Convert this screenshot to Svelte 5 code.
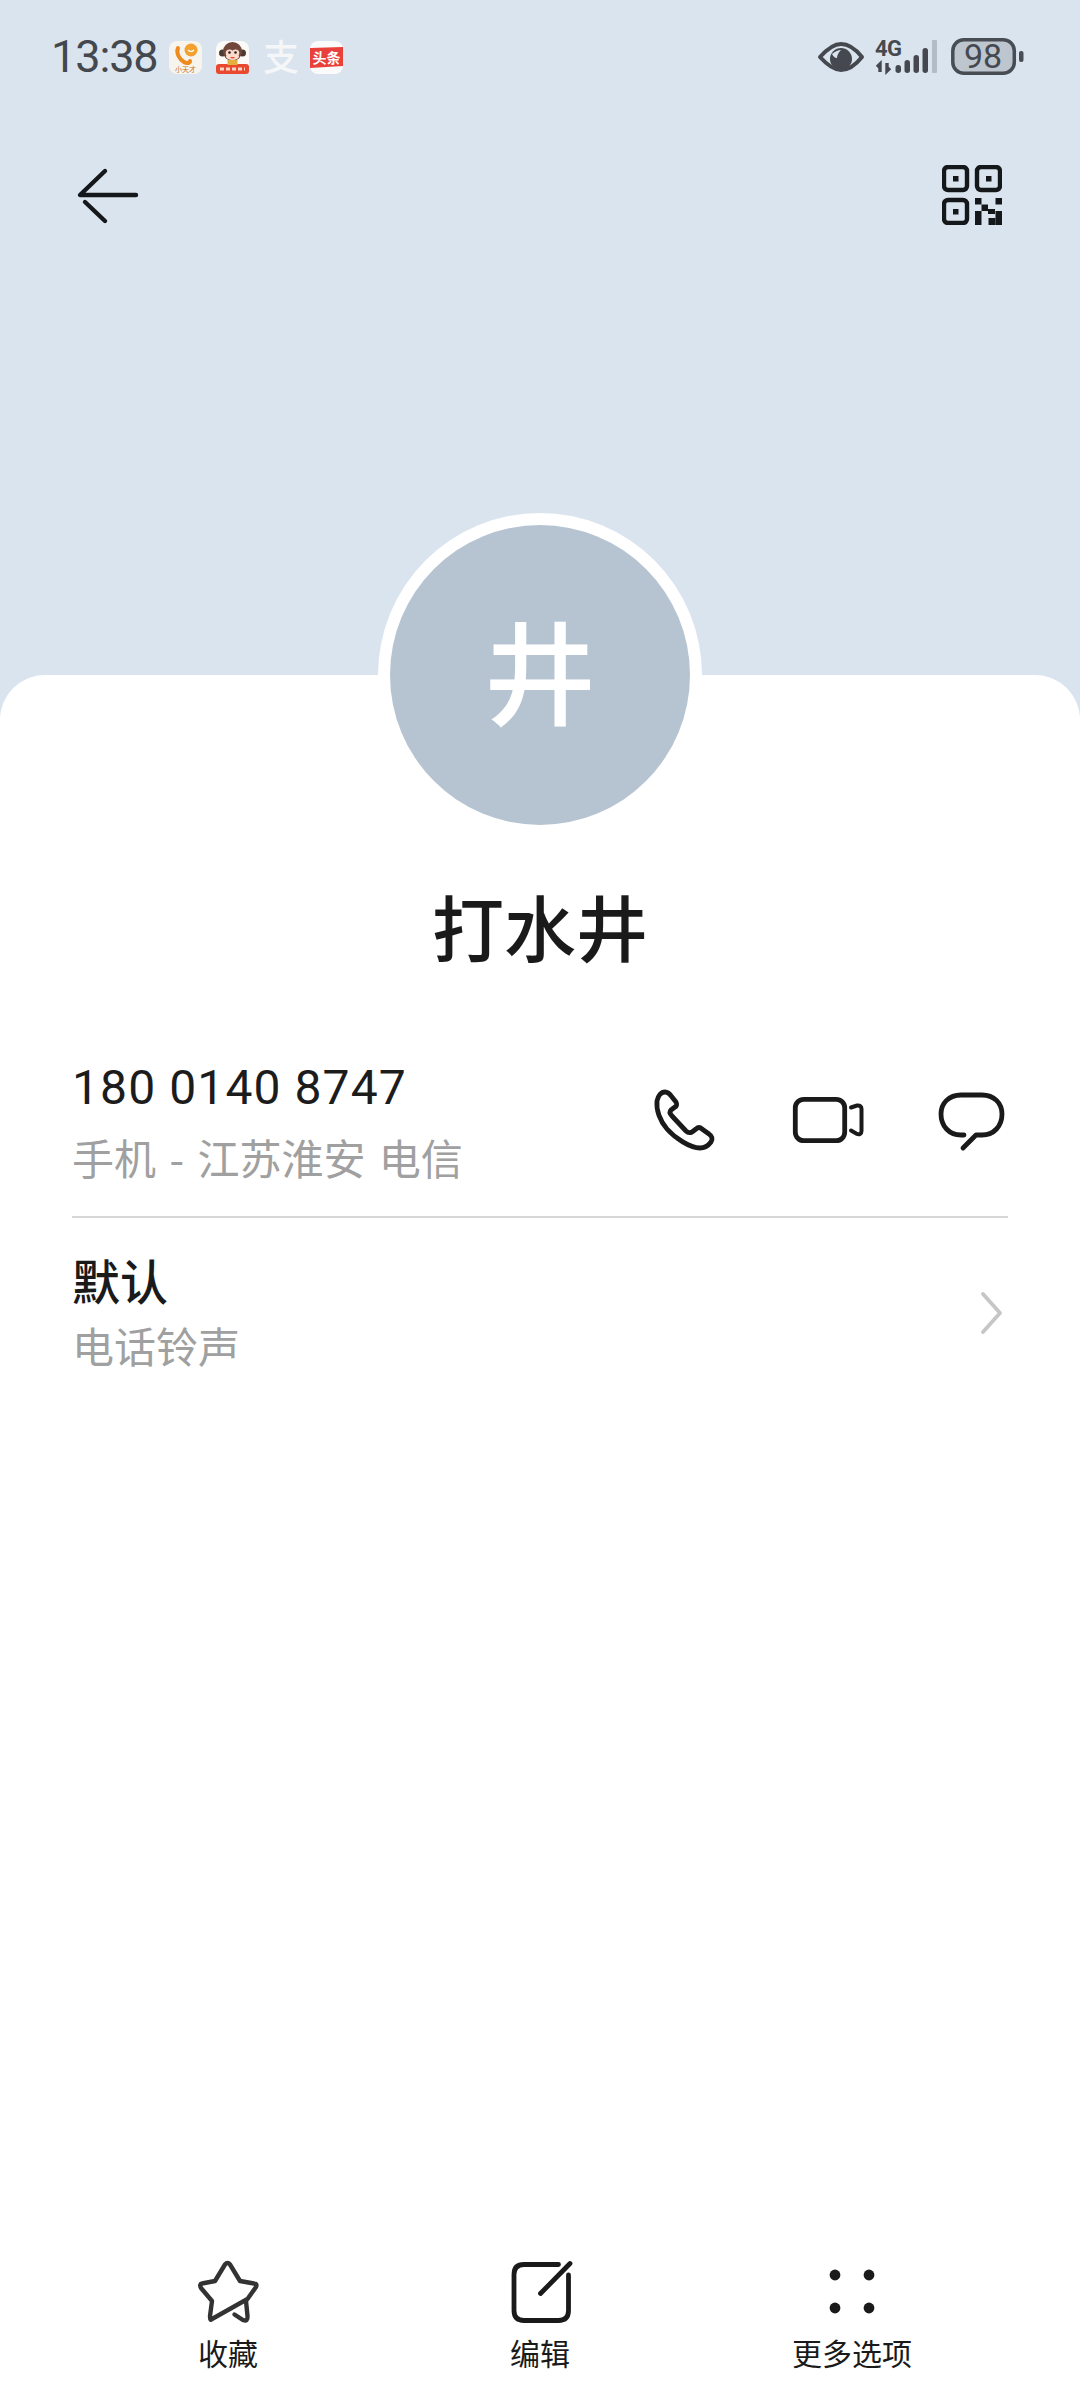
<script>
  const actions = [
    { label: '收藏', kind: 'star' },
    { label: '编辑', kind: 'edit' },
    { label: '更多选项', kind: 'more' }
  ];
  const bars = [
    { x: 896.5, y: 65, h: 8 },
    { x: 905.5, y: 60, h: 13 },
    { x: 914.5, y: 55, h: 18 },
    { x: 923.5, y: 48, h: 25 }
  ];
  const qrCells = [
    [975, 198, 6.5, 6.5], [995.5, 198, 6.5, 6.5], [981.5, 204.5, 6.5, 6.5],
    [988, 209, 7, 5], [975, 211, 6.5, 14], [995.5, 211, 6.5, 14], [988.5, 218, 7, 7]
  ];
</script>

<div class="screen">
  <header class="top">
    <div class="status">
      <div class="status-left">
        <span class="time">13:38</span>
        <div class="apps">
          <svg class="app" viewBox="0 0 33 33" aria-hidden="true">
            <rect width="33" height="33" rx="8" fill="#f7f4ee"/>
            <path d="M9 7 C7 12 10 18 15 21 C18 23 21 22 21 20" fill="none" stroke="#ee8a1e" stroke-width="4" stroke-linecap="round"/>
            <circle cx="22" cy="9" r="6.500" fill="#f2a02e"/>
            <path d="M19 9 Q22 12 25 9" fill="none" stroke="#fff" stroke-width="1.300"/>
            <text x="16.500" y="31" class="app-tiny" fill="#c9772a">小天才</text>
          </svg>
          <svg class="app gap-a" viewBox="0 0 33 33" aria-hidden="true">
            <rect width="33" height="33" rx="8" fill="#fbfaf7"/>
            <rect y="23" width="33" height="10" rx="3" fill="#e8492f"/>
            <circle cx="6.500" cy="12" r="3.500" fill="#4b3a33"/>
            <circle cx="26.500" cy="12" r="3.500" fill="#4b3a33"/>
            <circle cx="16.500" cy="10.500" r="9.500" fill="#70473a"/>
            <ellipse cx="13.500" cy="12" rx="3.800" ry="3.600" fill="#fbd9cb"/>
            <ellipse cx="19.500" cy="12" rx="3.800" ry="3.600" fill="#fbd9cb"/>
            <ellipse cx="16.500" cy="15.500" rx="6.500" ry="3.600" fill="#fbd9cb"/>
            <circle cx="13.500" cy="11.500" r="1.300" fill="#222"/>
            <circle cx="19.500" cy="11.500" r="1.300" fill="#222"/>
            <path d="M14 16 Q16.500 19 19 16 Z" fill="#e8492f"/>
            <rect x="11.500" y="19" width="10" height="5" fill="#e3b23e"/>
            <path d="M4 28 H29" stroke="#f8d7c9" stroke-width="3" stroke-dasharray="4 2"/>
          </svg>
          <span class="alipay">支</span>
          <svg class="app" viewBox="0 0 33 33" aria-hidden="true">
            <rect width="33" height="33" rx="8" fill="#fbfbfb"/>
            <path d="M0 7 L33 6 V25 L0 27 Z" fill="#e8403a"/>
            <text x="16.500" y="22" class="app-news" fill="#fff">头条</text>
          </svg>
        </div>
      </div>
      <div class="status-right">
        <svg class="sys" viewBox="815 36 212 42" aria-hidden="true">
          <path d="M821 57 C830 47 836 44 842 44 C848 44 855 47 863 57 C855 67 848 70 842 70 C836 70 830 67 821 57 Z" fill="none" stroke="#45494f" stroke-width="4" stroke-linejoin="round"/>
          <circle cx="842" cy="59" r="11" fill="#45494f"/>
          <path d="M833 54 Q838 50 842 50 Q838 54 838 58 Q835 58 833 54 Z" fill="#dae4ee"/>
          <text x="876" y="56" class="net">4G</text>
          <path d="M881 72 V64 L878 67 M888 63 V71 L891 68" fill="none" stroke="#45494f" stroke-width="3.400"/>
          {#each bars as b}
            <rect x={b.x} y={b.y} width="5.500" height={b.h} rx="2.700" fill="#45494f"/>
          {/each}
          <rect x="933" y="40" width="5" height="33" rx="1" fill="#b2bcc7"/>
          <rect x="953.800" y="39.800" width="61.500" height="33.500" rx="11" fill="#bdc6cf" stroke="#484d53" stroke-width="3.500"/>
          <text x="984" y="68" class="batt">98</text>
          <rect x="1020" y="51" width="4.500" height="11" rx="2" fill="#484d53"/>
        </svg>
      </div>
    </div>
    <nav class="nav">
      <svg class="back" viewBox="70 160 76 68" aria-hidden="true">
        <path d="M105 170 L80 194 H136" fill="none" stroke="#15181b" stroke-width="4.400" stroke-linecap="round" stroke-linejoin="round"/>
        <path d="M85 201 L105 220" fill="none" stroke="#15181b" stroke-width="4.400" stroke-linecap="round"/>
      </svg>
      <svg class="qr" viewBox="942 165 60 60" aria-hidden="true">
        <g fill="none" stroke="#15181b" stroke-width="4.400">
          <rect x="944" y="167" width="23" height="23" rx="4"/>
          <rect x="977" y="167" width="23" height="23" rx="4"/>
          <rect x="944" y="200" width="23" height="23" rx="4"/>
        </g>
        <g fill="#15181b">
          <rect x="953" y="176" width="5.500" height="5.500"/>
          <rect x="986" y="176" width="5.500" height="5.500"/>
          <rect x="953" y="209" width="5.500" height="5.500"/>
          {#each qrCells as c}
            <rect x={c[0]} y={c[1]} width={c[2]} height={c[3]}/>
          {/each}
        </g>
      </svg>
    </nav>
  </header>

  <main class="card">
    <div class="avatar"><span>井</span></div>
    <h1 class="name">打水井</h1>

    <section class="row contact">
      <div class="text">
        <div class="number">180 0140 8747</div>
        <div class="sub">手机 - 江苏淮安 电信</div>
      </div>
      <div class="contact-actions">
        <svg class="ic-phone" viewBox="650 1088 68 64" aria-hidden="true">
          <path d="M657 1101 C658 1096 661 1092 665 1092 C668 1092 670 1094 672 1097 L676 1102 C677 1104 677 1106 675 1107 L671 1110 C669 1112 670 1114 672 1116 L686 1131 C688 1133 690 1133 692 1132 L696 1129 C698 1127 700 1127 702 1129 L709 1134 C712 1136 713 1139 711 1142 C708 1146 704 1148 700 1148 C690 1148 675 1138 667 1129 C660 1121 656 1110 657 1101 Z" fill="none" stroke="#1a1a1a" stroke-width="4.800" stroke-linejoin="round"/>
        </svg>
        <svg class="ic-video" viewBox="790 1088 76 64" aria-hidden="true">
          <rect x="795.300" y="1099.300" width="49.400" height="41.400" rx="8.500" fill="none" stroke="#1a1a1a" stroke-width="4.800"/>
          <path d="M851 1107.500 L857 1105.500 C860 1105 861.500 1107 861.500 1109 V1131 C861.500 1133.500 859.500 1135 857 1134 L851 1130.500" fill="none" stroke="#1a1a1a" stroke-width="4" stroke-linecap="round"/>
        </svg>
        <svg class="ic-chat" viewBox="936 1088 72 64" aria-hidden="true">
          <path d="M964 1135 H961 C949 1135 941 1126 941 1114 C941 1103 949 1095 961 1095 H982 C994 1095 1002 1103 1002 1114 C1002 1126 994 1135 982 1135 H976 L963 1148" fill="none" stroke="#1a1a1a" stroke-width="4.800" stroke-linecap="round" stroke-linejoin="round"/>
        </svg>
      </div>
    </section>

    <div class="divider"></div>

    <section class="row ringtone">
      <div class="text">
        <div class="title">默认</div>
        <div class="sub">电话铃声</div>
      </div>
      <svg class="chevron" viewBox="0 0 26 46" aria-hidden="true">
        <path d="M4 4 L21 23 L4 42" fill="none" stroke="#c6c6c6" stroke-width="3.800" stroke-linecap="round" stroke-linejoin="round"/>
      </svg>
    </section>

    <footer class="bottom">
      {#each actions as a}
        <button class="tab" type="button">
          {#if a.kind === 'star'}
            <svg viewBox="190 2256 76 70" aria-hidden="true">
              <path d="M212 2318 L247.500 2298 L256 2286 Q257.500 2282.500 254 2282.500 L240 2280 L230 2263.500 Q227.500 2260.500 225 2263.500 L215 2280 L202 2282.500 Q199 2283 201 2287 L212 2300 L210 2315 Q210 2320.500 212 2318 Z" fill="none" stroke="#333" stroke-width="4.400" stroke-linejoin="round"/>
              <path d="M234.500 2313.500 L243 2319 Q248 2321 247.500 2315 L246 2300" fill="none" stroke="#333" stroke-width="4.400" stroke-linecap="round"/>
            </svg>
          {:else if a.kind === 'edit'}
            <svg viewBox="502 2256 76 70" aria-hidden="true">
              <path d="M558.500 2263.500 H524 Q514 2263.500 514 2273.500 V2309.500 Q514 2319.500 524 2319.500 H558.500 Q568.500 2319.500 568.500 2309.500 V2274" fill="none" stroke="#1a1a1a" stroke-width="4.800" stroke-linecap="round"/>
              <path d="M570 2262.500 L540.500 2292.500" fill="none" stroke="#1a1a1a" stroke-width="4.800" stroke-linecap="round"/>
            </svg>
          {:else}
            <svg viewBox="817 2256 76 70" aria-hidden="true">
              <circle cx="838" cy="2274" r="5.400" fill="#1a1a1a"/>
              <circle cx="872" cy="2274" r="5.400" fill="#1a1a1a"/>
              <circle cx="838" cy="2307" r="5.400" fill="#1a1a1a"/>
              <circle cx="872" cy="2307" r="5.400" fill="#1a1a1a"/>
            </svg>
          {/if}
          <span>{a.label}</span>
        </button>
      {/each}
    </footer>
  </main>
</div>

<style>
  :global(body) {
    margin: 0;
    background: #fff;
  }
  .screen {
    width: 1080px;
    height: 2400px;
    display: flex;
    flex-direction: column;
    background: #dae4ee;
    overflow: hidden;
    font-family: "Noto Sans CJK SC", "Noto Sans", sans-serif;
    color: #1a1a1a;
  }
  .top {
    height: 675px;
    flex: none;
    padding: 36px 56px 0 51px;
    box-sizing: border-box;
  }
  .status {
    height: 42px;
    display: flex;
    justify-content: space-between;
    align-items: center;
  }
  .status-left {
    display: flex;
    align-items: center;
  }
  .time {
    font-family: Roboto, sans-serif;
    font-size: 45px;
    line-height: 42px;
    color: #43484e;
    letter-spacing: -1.1px;
    width: 118px;
  }
  .apps {
    display: flex;
    align-items: center;
    gap: 14px;
  }
  .app {
    width: 33px;
    height: 33px;
    display: block;
  }
  .alipay {
    width: 33px;
    height: 33px;
    font-size: 36px;
    font-weight: 500;
    line-height: 28px;
    text-align: center;
    color: #f4f6f8;
  }
  .app-tiny {
    font-size: 7px;
    text-anchor: middle;
  }
  .app-news {
    font-size: 14px;
    font-weight: 700;
    text-anchor: middle;
  }
  .sys {
    width: 212px;
    height: 42px;
    display: block;
    margin-right: -2px;
  }
  .net {
    font-family: Roboto, sans-serif;
    font-size: 22px;
    font-weight: 700;
    fill: #45494f;
    letter-spacing: -0.5px;
  }
  .batt {
    font-family: Roboto, sans-serif;
    font-size: 34px;
    fill: #45494f;
    text-anchor: middle;
  }
  .nav {
    margin-top: 83px;
    display: flex;
    justify-content: space-between;
    align-items: center;
  }
  .back {
    width: 76px;
    height: 68px;
    display: block;
    margin-left: 19px;
  }
  .qr {
    width: 60px;
    height: 60px;
    display: block;
    margin-right: 22px;
  }
  .card {
    flex: 1;
    display: flex;
    flex-direction: column;
    background: #fff;
    border-radius: 45px 45px 0 0;
    padding: 0 72px;
  }
  .avatar {
    align-self: center;
    flex: none;
    width: 300px;
    height: 300px;
    margin-top: -150px;
    padding-bottom: 14px;
    box-sizing: border-box;
    border-radius: 50%;
    background: #b6c4d2;
    box-shadow: 0 0 0 12px #fff;
    display: flex;
    align-items: center;
    justify-content: center;
    color: #fff;
    font-size: 112px;
    font-weight: 500;
    line-height: 1;
  }
  .name {
    margin: 50px 0 0;
    font-size: 72px;
    line-height: 100px;
    font-weight: 500;
    text-align: center;
    color: #1a1a1a;
  }
  .row {
    display: flex;
    justify-content: space-between;
  }
  .contact {
    margin-top: 75px;
    padding-bottom: 22px;
  }
  .number {
    font-family: Roboto, sans-serif;
    font-size: 48px;
    line-height: 72px;
    letter-spacing: 1.1px;
    color: #1c1c1c;
    padding-top: 2px;
    margin-bottom: -2px;
  }
  .sub {
    font-size: 42px;
    color: #a0a0a0;
    word-spacing: 4px;
  }
  .contact .sub {
    line-height: 70px;
    padding-bottom: 2px;
  }
  .contact-actions {
    display: flex;
    align-items: center;
    gap: 72px;
    margin-top: 38px;
    height: 64px;
  }
  .ic-phone {
    width: 68px;
    height: 64px;
    display: block;
  }
  .ic-video {
    width: 76px;
    height: 64px;
    display: block;
  }
  .ic-chat {
    width: 72px;
    height: 64px;
    display: block;
    margin-left: -2px;
  }
  .divider {
    height: 2px;
    background: #d6d6d6;
  }
  .ringtone {
    padding-top: 28px;
    align-items: center;
  }
  .title {
    font-size: 48px;
    line-height: 66px;
    font-weight: 500;
  }
  .ringtone .sub {
    line-height: 66px;
    padding-bottom: 2px;
  }
  .chevron {
    width: 26px;
    height: 46px;
    display: block;
    margin-right: 3px;
  }
  .bottom {
    margin-top: auto;
    margin-bottom: 3px;
    height: 140px;
    display: grid;
    grid-template-columns: repeat(3, 1fr);
  }
  .tab {
    appearance: none;
    border: 0;
    padding: 0;
    background: none;
    font: inherit;
    color: #1a1a1a;
    display: flex;
    flex-direction: column;
    align-items: center;
    justify-content: flex-start;
  }
  .tab svg {
    width: 76px;
    height: 70px;
    display: block;
    flex: none;
  }
  .tab span {
    font-size: 30px;
    line-height: 44px;
    margin-top: 3px;
  }
</style>
